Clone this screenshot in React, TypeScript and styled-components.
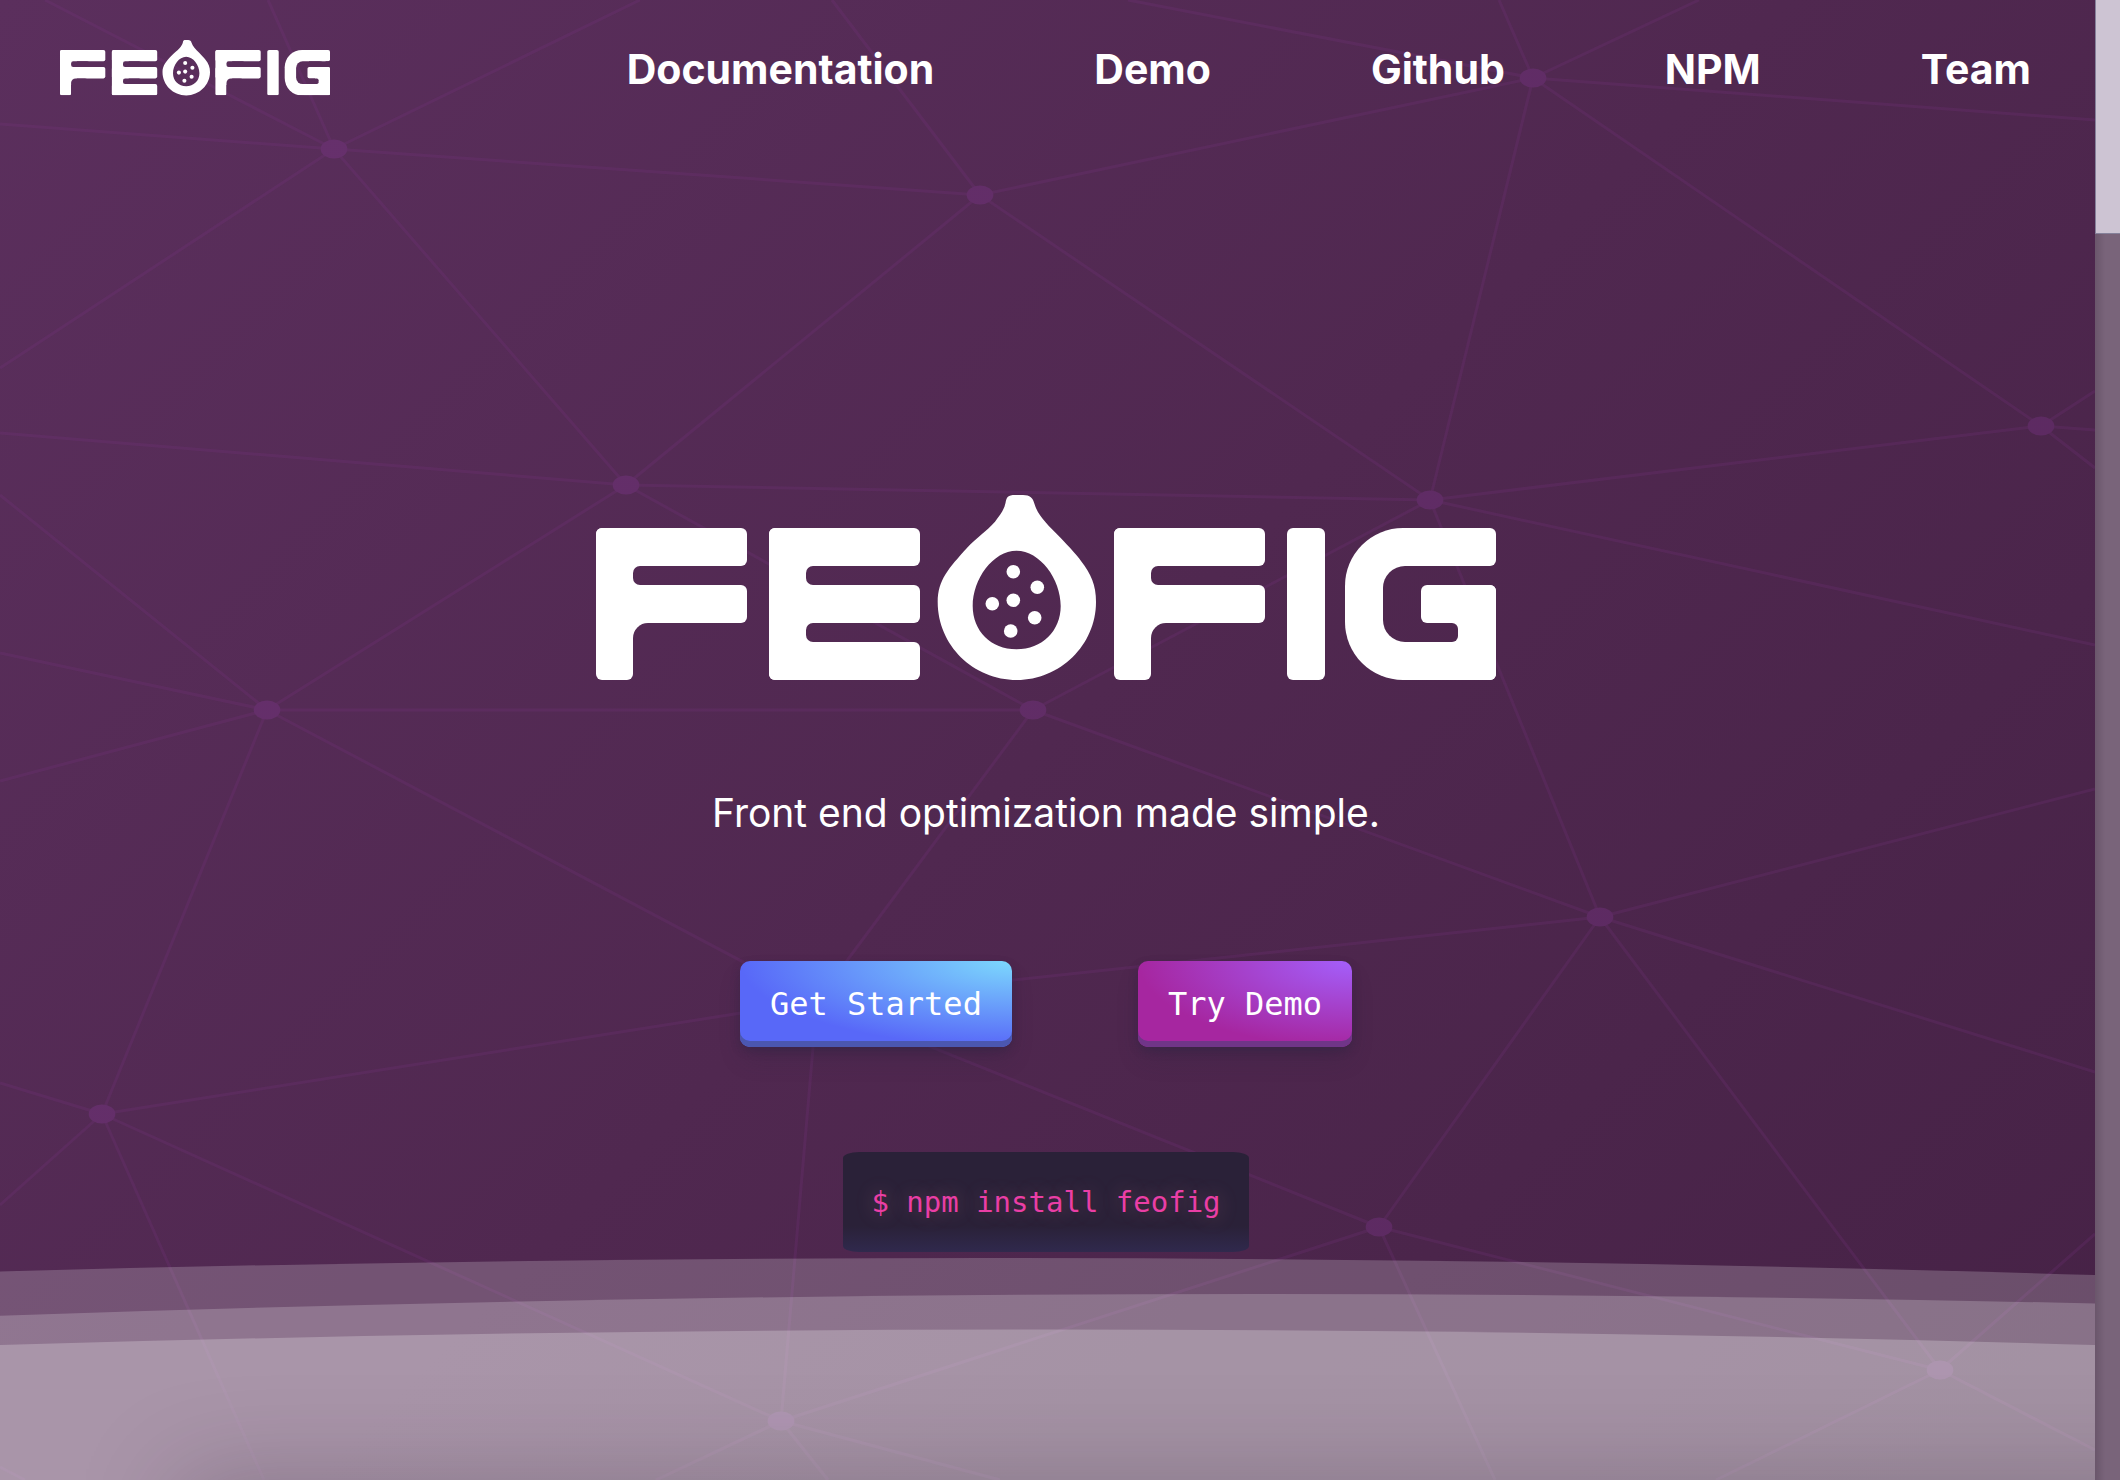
import React, { useId } from "react";
import styled, { createGlobalStyle } from "styled-components";

const GlobalStyle = createGlobalStyle`
  *, *::before, *::after { box-sizing: border-box; }
  html, body, #root { height: 100%; }
  body {
    margin: 0;
    overflow: hidden;
    background: #4d274f;
    color: #fff;
    font-family: Inter, "Noto Sans", sans-serif;
  }
`;

const Shell = styled.div`
  display: grid;
  grid-template-columns: minmax(0, 1fr) 25px;
  height: 100vh;
`;

const Page = styled.div`
  position: relative;
  isolation: isolate;
  display: flex;
  flex-direction: column;
  overflow: hidden;
  background: linear-gradient(135deg, #5b2f5d 0%, #502850 50%, #462246 100%);
`;

const Backdrop = styled.svg`
  position: absolute;
  inset: 0;
  z-index: -1;
  width: 100%;
  height: 100%;
`;

const Header = styled.header`
  display: flex;
  align-items: flex-start;
  justify-content: space-between;
  padding: 40px 64px 0 60px;
`;

const HomeLink = styled.a`
  display: block;
  line-height: 0;
`;

const Mark = styled.svg<{ $width: number }>`
  width: ${(p) => p.$width}px;
  height: auto;
`;

const Nav = styled.nav`
  display: flex;
  gap: 160px;
`;

const NavLink = styled.a`
  color: inherit;
  font-size: 41px;
  font-weight: 700;
  line-height: 58px;
  text-decoration: none;
`;

const Hero = styled.main`
  display: flex;
  flex-direction: column;
  align-items: center;
  padding: 397px 3px 0 0;
`;

const Title = styled.h1`
  margin: 0;
  line-height: 0;
`;

const Tagline = styled.p`
  margin: 105px 0 0;
  font-size: 39px;
  line-height: 56px;
`;

const Actions = styled.div`
  display: flex;
  gap: 126px;
  margin-top: 120px;
`;

const ActionButton = styled.button<{ $from: string; $to: string; $lip: string }>`
  height: 86px;
  padding: 0 30px;
  border: 0;
  border-radius: 10px;
  background: radial-gradient(100% 100% at 100% 0, ${(p) => p.$from} 0, ${(p) => p.$to} 100%);
  box-shadow:
    rgba(45, 35, 66, 0.4) 0 4px 8px,
    rgba(45, 35, 66, 0.3) 0 14px 26px -6px,
    inset 0 -6px 0 ${(p) => p.$lip};
  color: #fff;
  font-family: "DejaVu Sans Mono", monospace;
  font-size: 32px;
  line-height: 40px;
  cursor: pointer;
`;

const Command = styled.code`
  display: block;
  margin-top: 105px;
  padding: 28px;
  border-radius: 16px / 6px;
  background: linear-gradient(#2a2138 0%, #2a2138 74%, #30294d 100%);
  color: #ea3ea5;
  font-family: "DejaVu Sans Mono", monospace;
  font-size: 29px;
  line-height: 44px;
  text-shadow: 0 0 20px rgba(234, 150, 165, 0.3);
`;

const NextSection = styled.section`
  position: absolute;
  top: 100%;
  left: 180px;
  right: -200px;
  height: 200px;
  box-shadow: 0 0 100px rgba(40, 28, 42, 0.25);
`;

const ScrollTrack = styled.div`
  background: linear-gradient(90deg, #6a566b 0, #79647a 10px, #79647a 100%);
`;

const ScrollThumb = styled.div`
  height: 234px;
  border: solid #85819a;
  border-width: 0 0 1px 1px;
  background: #cdc4d3;
`;

type Box = [x: number, y: number, w: number, h: number, r: number, cut?: boolean];

/* Rounded boxes are painted in order; boxes flagged as cuts are punched out. */
const letterF = (x: number): Box[] => [
  [x, 33, 37, 152, 6],
  [x, 33, 151, 38, 6],
  [x, 90, 151, 38, 6],
  [x + 10, 50, 46, 100, 0],
  [x + 37, 71, 60, 19, 7, true],
  [x + 37, 128, 60, 80, 15, true],
];

const letterE = (x: number): Box[] => [
  [x, 33, 38, 152, 6],
  [x, 33, 151, 38, 6],
  [x, 90, 151, 38, 6],
  [x, 147, 151, 38, 6],
  [x + 10, 50, 46, 120, 0],
  [x + 37, 71, 60, 19, 7, true],
  [x + 37, 128, 60, 19, 7, true],
];

const letterG: Box[] = [
  [749, 33, 140, 152, 58],
  [810, 33, 90, 38, 6],
  [810, 147, 90, 38, 6],
  [787, 71, 100, 76, 22, true],
  [830, 71, 80, 19, 0, true],
  [825, 90, 75, 38, 6],
  [862, 90, 38, 95, 6],
  [850, 110, 20, 55, 0],
  [815, 128, 47, 19, 6, true],
];

const boxes: Box[] = [
  ...letterF(0),
  ...letterE(173),
  ...letterF(518),
  [691, 33, 38, 152, 6],
  ...letterG,
];

const seeds = [
  [417.3, 76.7],
  [441.3, 92.3],
  [396.3, 108.7],
  [417.3, 105.3],
  [438.7, 122.7],
  [414.7, 136],
];

function Logo({ width }: { width: number }) {
  const id = useId();
  return (
    <Mark $width={width} viewBox="0 0 900 185" role="img" aria-label="Feofig">
      <mask id={id} maskUnits="userSpaceOnUse" x="0" y="0" width="900" height="185">
        {boxes.map(([x, y, w, h, r, cut], i) => (
          <rect key={i} x={x} y={y} width={w} height={h} rx={r} fill={cut ? "#000" : "#fff"} />
        ))}
      </mask>
      <rect width="900" height="185" fill="#fff" mask={`url(#${id})`} />
      <path
        fill="#fff"
        fillRule="evenodd"
        d="M419 0H427C434 0 437 3 438.5 9C442 21 452 30 464 42.3C474 53 480 59 485 66C495 79 500 90 500 107C500 150 464 185 421 185C377 185 341.7 150 341.7 107C341.7 85 353 73 370.7 53.3C381 42 391 36 399 26.7C404 20 408 15 409.5 8C410.5 2 412 0 419 0ZM420.5 55.7C397 55.7 376.7 84 376.7 111C376.7 136 395 154.3 420.5 154.3C446 154.3 464.7 136 464.7 111C464.7 84 444 55.7 420.5 55.7Z"
      />
      {seeds.map(([x, y]) => (
        <circle key={`${x}-${y}`} cx={x} cy={y} r="6.8" fill="#fff" />
      ))}
    </Mark>
  );
}

const nodes: Record<string, [number, number]> = {
  a: [334, 149],
  b: [980, 195],
  c: [626, 485],
  d: [267, 710],
  e: [1033, 710],
  f: [1533, 78],
  g: [2041, 426],
  h: [1430, 500],
  i: [102, 1114],
  j: [781, 1421],
  k: [1600, 917],
  l: [1379, 1227],
  m: [1940, 1370],
  n: [817, 1001],
};

const links = [
  "ab", "ac", "bc", "bf", "bh", "cd", "ch", "ce", "de", "di", "dn", "ek", "eh", "en",
  "fh", "fg", "gh", "hk", "kn", "kl", "km", "in", "ij", "jn", "jl", "nl", "lm",
];

const rays: [string, number, number][] = [
  ["a", 45, 0], ["a", 268, 0], ["a", 640, 0], ["a", 0, 124], ["a", 0, 368],
  ["b", 832, 0], ["c", 0, 433], ["d", 0, 495], ["d", 0, 653], ["d", 0, 781],
  ["f", 1128, 0], ["f", 1499, 0], ["f", 1699, 0], ["f", 2095, 120],
  ["g", 2095, 391], ["g", 2095, 430], ["g", 2095, 468], ["h", 2095, 645],
  ["k", 2095, 789], ["k", 2095, 1072], ["i", 0, 1083], ["i", 0, 1205], ["i", 264, 1480],
  ["j", 656, 1480], ["j", 828, 1480], ["j", 1000, 1480], ["l", 1495, 1480],
  ["m", 2095, 1234], ["m", 1716, 1480], ["m", 2095, 1450],
];

function Network() {
  const nodeFill = useId();
  return (
    <Backdrop viewBox="0 0 2095 1480" preserveAspectRatio="none" aria-hidden="true">
      <linearGradient id={nodeFill} gradientUnits="userSpaceOnUse" x1="0" y1="0" x2="2095" y2="1480">
        <stop offset="0" stopColor="#68316e" />
        <stop offset="1" stopColor="#59285e" />
      </linearGradient>
      <g stroke="#7d3488" strokeOpacity="0.19" strokeWidth="3">
        {links.map((l) => {
          const [x1, y1] = nodes[l[0]];
          const [x2, y2] = nodes[l[1]];
          return <line key={l} x1={x1} y1={y1} x2={x2} y2={y2} />;
        })}
        {rays.map(([n, x, y]) => (
          <line key={`${n}${x}-${y}`} x1={nodes[n][0]} y1={nodes[n][1]} x2={x} y2={y} />
        ))}
        <line x1="0" y1="1467" x2="25" y2="1480" />
      </g>
      {Object.entries(nodes).map(([k, [x, y]]) => (
        <ellipse key={k} cx={x} cy={y} rx="13.3" ry="9.5" fill={`url(#${nodeFill})`} />
      ))}
      <g fill="#fff">
        <path fillOpacity="0.2" d="M0 1271.4Q1047.5 1243 2095 1275V1480H0Z" />
        <path fillOpacity="0.2" d="M0 1315.7Q1047.5 1279.6 2095 1303.5V1480H0Z" />
        <path fillOpacity="0.23" d="M0 1345Q1047.5 1314 2095 1345V1480H0Z" />
      </g>
    </Backdrop>
  );
}

const navItems = ["Documentation", "Demo", "Github", "NPM", "Team"];

export default function App() {
  return (
    <>
      <GlobalStyle />
      <Shell>
        <Page>
          <Network />
          <Header>
            <HomeLink href="#home">
              <Logo width={270} />
            </HomeLink>
            <Nav>
              {navItems.map((item) => (
                <NavLink key={item} href={`#${item.toLowerCase()}`}>
                  {item}
                </NavLink>
              ))}
            </Nav>
          </Header>
          <Hero>
            <Title>
              <Logo width={900} />
            </Title>
            <Tagline>Front end optimization made simple.</Tagline>
            <Actions>
              <ActionButton type="button" $from="#7cd8fd" $to="#5868f8" $lip="#4b57b0">
                Get Started
              </ActionButton>
              <ActionButton type="button" $from="#a45ffb" $to="#a626a0" $lip="#703588">
                Try Demo
              </ActionButton>
            </Actions>
            <Command>$ npm install feofig</Command>
          </Hero>
          <NextSection />
        </Page>
        <ScrollTrack>
          <ScrollThumb />
        </ScrollTrack>
      </Shell>
    </>
  );
}
